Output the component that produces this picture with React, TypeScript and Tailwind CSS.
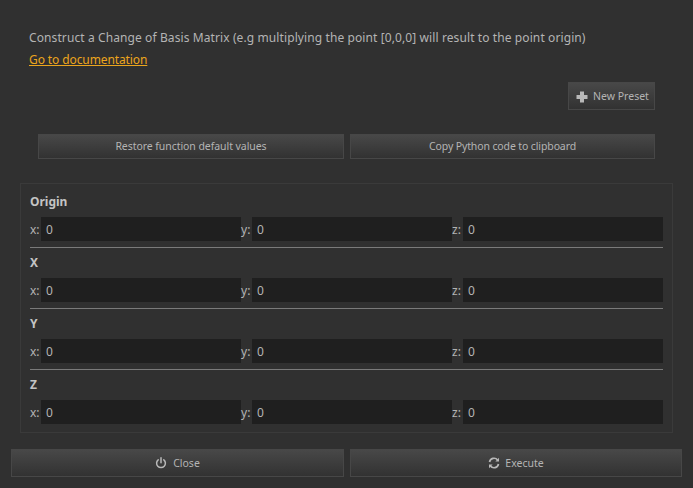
import React from "react";

function Row({ title }: { title: string }) {
  const items = ["x", "y", "z"];
  return (
    <div>
      <div className="h-[17px] text-[12px] leading-[17px] font-bold text-[#c4c4c4]">{title}</div>
      <div className="mt-[7px] flex h-6">
        {items.map((a) => (
          <div key={a} className="flex">
            <span className="w-[11px] pt-px text-[12px] leading-[24px] text-[#b4b4b4]">{a}:</span>
            <div className="h-6 w-[200px] bg-[#1f1f1f] pl-[5px] pt-px text-[12px] leading-[24px] text-[#b4b4b4]">0</div>
          </div>
        ))}
      </div>
    </div>
  );
}

const btn =
  "flex items-center justify-center border border-[#474747] bg-gradient-to-b from-[#484848] to-[#323232] text-[10.5px] text-[#b4b4b4]";

export default function App() {
  return (
    <div className="flex h-[488px] w-[693px] flex-col overflow-hidden bg-[#303030] font-['Noto_Sans',sans-serif]">
      <div className="pl-[29px] pt-[29px]">
        <div className="h-[18px] text-[12px] leading-[18px] tracking-[0.1px] text-[#b4b4b4]">
          Construct a Change of Basis Matrix (e.g multiplying the point [0,0,0] will result to the point origin)
        </div>
        <div className="mt-[4px] h-[18px] text-[12px] leading-[18px] tracking-[-0.1px] text-[#eca51c] underline">Go to documentation</div>
      </div>
      <div className="mt-[13px] flex justify-end pr-[38px]">
        <div className={`${btn} h-7 w-[87px] gap-[5px] pl-[2px] pt-px`}>
          <svg width="12" height="12" viewBox="0 0 12 12">
            <path d="M4 0.5h4v3.5h3.5v4H8v3.5H4V8H0.5V4H4z" fill="#b8b8b8" />
          </svg>
          <span>New Preset</span>
        </div>
      </div>
      <div className="mt-6 flex gap-[6px] pl-[38px]">
        <div className={`${btn} h-[25px] w-[306px] pt-px tracking-[-0.06px]`}>Restore function default values</div>
        <div className={`${btn} h-[25px] w-[305px] pt-px tracking-[-0.12px]`}>Copy Python code to clipboard</div>
      </div>
      <div className="ml-5 mt-6 flex h-[250px] w-[653px] flex-col border border-[#3a3a3a] pl-[9px] pt-[9px]">
        {["Origin", "X", "Y", "Z"].map((t, i) => (
          <React.Fragment key={t}>
            <Row title={t} />
            {i < 3 && <div className="my-[6px] h-px w-[633px] bg-[#7a7a7a]" />}
          </React.Fragment>
        ))}
      </div>
      <div className="ml-[11px] mt-4 flex gap-[6px]">
        <div className={`${btn} h-7 w-[333px] gap-[6px]`}>
          <svg width="12" height="12" viewBox="0 0 12 12" fill="none" stroke="#b8b8b8" strokeWidth="1.5" strokeLinecap="round">
            <path d="M3.2 2.8a4.4 4.4 0 1 0 5.6 0" />
            <path d="M6 0.8v5" />
          </svg>
          <span className="pt-[2px]">Close</span>
        </div>
        <div className={`${btn} h-7 w-[332px] gap-[5px]`}>
          <svg width="12" height="12" viewBox="0 0 12 12" fill="none" stroke="#b8b8b8" strokeWidth="1.7">
            <path d="M1.5 5A4.6 4.6 0 0 1 9.6 3" />
            <path d="M10.5 7A4.6 4.6 0 0 1 2.4 9" />
            <path d="M11 0.8V4.4H7.4z" fill="#b8b8b8" stroke="none" />
            <path d="M1 11.2V7.6H4.6z" fill="#b8b8b8" stroke="none" />
          </svg>
          <span className="pt-[2px]">Execute</span>
        </div>
      </div>
    </div>
  );
}
